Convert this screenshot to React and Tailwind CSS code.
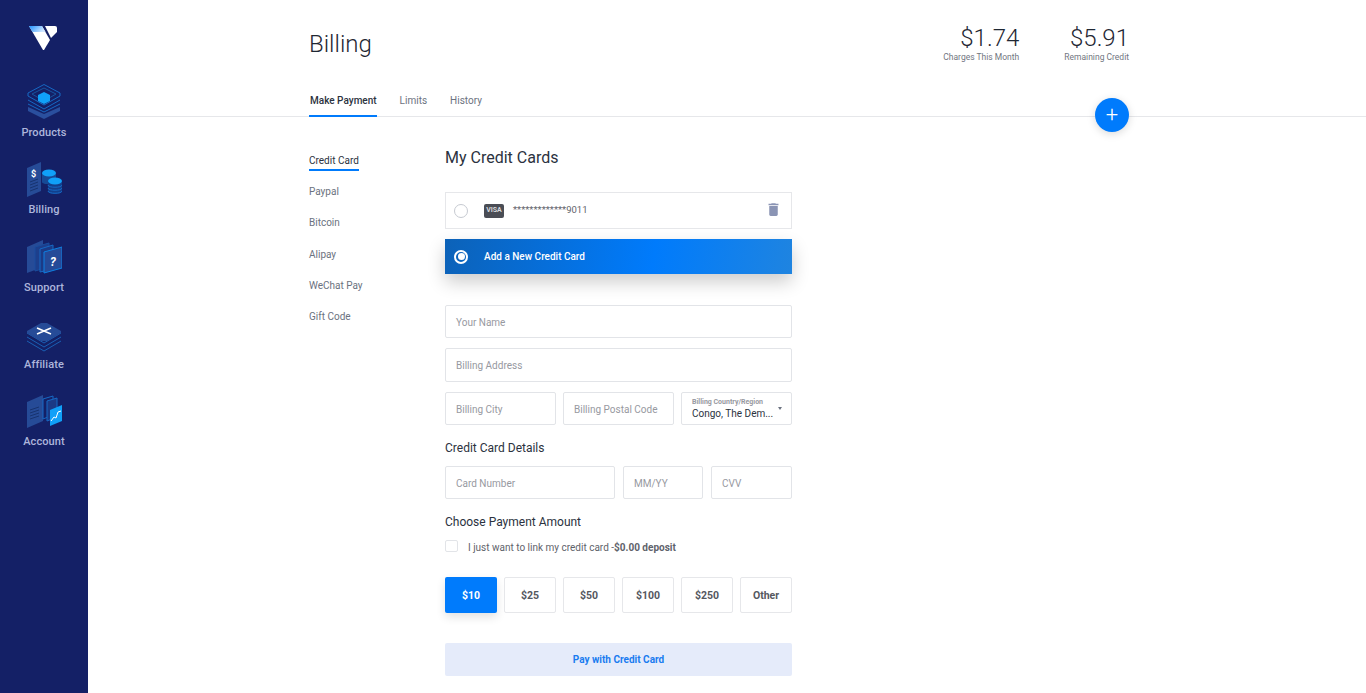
import React from 'react';

const Logo = () => (
    <svg width="28" height="26" viewBox="0 0 28 26" className="-ml-[2px] block">
        <defs>
            <linearGradient id="logoTop" x1="0" y1="0" x2="1" y2="0.4">
                <stop offset="0" stopColor="#1e90ff" />
                <stop offset="1" stopColor="#cfe6ff" />
            </linearGradient>
        </defs>
        <path d="M0 1H13L21 15L15 25H14Z" fill="#fff" />
        <path d="M0 1H13L16.500 7H3.500Z" fill="url(#logoTop)" />
        <path d="M16 1H26Q28 1 28 3V7L22 13Z" fill="#fff" />
    </svg>
);

const ProductsIcon = () => (
    <svg width="36" height="36" viewBox="0 0 36 36">
        <path d="M2 23L18 30L34 23V27L18 35L2 27Z" fill="#2a4f9e" />
        <path d="M2 16L18 25L34 16M2 20L18 28L34 20" fill="none" stroke="#1668c4" strokeWidth="1" />
        <path d="M2 9L18 .5L34 9V12L18 21L2 12Z" fill="none" stroke="#1668c4" strokeWidth="1" />
        <path d="M6 10L18 4L30 10L18 17Z" fill="none" stroke="#17549f" strokeWidth="1" />
        <path d="M18 8L24 11V17L18 20L12 17V11Z" fill="#10a0f8" />
    </svg>
);

const BillingIcon = () => (
    <svg width="36" height="36" viewBox="0 0 36 36">
        <path d="M1 7L15 1V30L1 36Z" fill="#264b97" />
        <text x="5" y="16" fill="#fff" fontSize="9" fontWeight="700" fontFamily="Roboto, sans-serif">$</text>
        <path d="M4 21L12 18M4 24L12 21M4 27L12 24M4 30L12 27" stroke="#17336f" strokeWidth="1" />
        <path d="M16 12V21C16 24 30 24 30 21V12" fill="#164a96" />
        <ellipse cx="23" cy="12" rx="7" ry="3.500" fill="#10a0f8" />
        <path d="M22 20V30C22 34 36 34 36 30V20" fill="#123f8c" />
        <path d="M22 24C22 27 36 27 36 24M22 27C22 30 36 30 36 27M22 30C22 33 36 33 36 30" fill="none" stroke="#1668c4" strokeWidth="1" />
        <ellipse cx="29" cy="20" rx="7" ry="3.500" fill="#10a0f8" />
    </svg>
);

const SupportIcon = () => (
    <svg width="36" height="36" viewBox="0 0 36 36">
        <path d="M1 8L17 1V28L1 34Z" fill="#264b97" />
        <path d="M9 8L23 4V28L9 32Z" fill="#1d3f8c" stroke="#1a4d9e" strokeWidth="1" />
        <path d="M14 10L27 6V30L14 33Z" fill="#1b3a86" stroke="#1668c4" strokeWidth="1" />
        <path d="M18 13L36 8V29L18 34Z" fill="#254a98" stroke="#0f7fe0" strokeWidth="1" />
        <text x="24" y="27" fill="#fff" fontSize="12" fontWeight="700" fontStyle="italic" fontFamily="Roboto, sans-serif">?</text>
    </svg>
);

const AffiliateIcon = () => (
    <svg width="36" height="30" viewBox="0 0 36 30">
        <path d="M1 15L18 25L35 15M1 19L18 29L35 19M1 11L18 21L35 11" fill="none" stroke="#1a5fb4" strokeWidth="1" />
        <path d="M1 9L15 1H21L35 9V11L21 19H15L1 11Z" fill="#264b97" />
        <path d="M11 6L25 12M25 6L11 12" fill="none" stroke="#fff" strokeWidth="1.500" />
    </svg>
);

const AccountIcon = () => (
    <svg width="36" height="36" viewBox="0 0 36 36">
        <path d="M1 9L17 2V28L1 35Z" fill="#264b97" />
        <path d="M4 17L13 14M4 20L13 17M4 23L13 20M4 26L13 23" stroke="#17336f" strokeWidth="1" />
        <path d="M17 6L27 3V22L17 26Z" fill="none" stroke="#1668c4" strokeWidth="1" />
        <path d="M21 8L31 5V24L21 28Z" fill="#1b3a86" stroke="#1668c4" strokeWidth="1" />
        <path d="M24 17L36 12V28L24 33Z" fill="#10a0f8" />
        <path d="M25 28L28 24L30 25L32 19L35 18" fill="none" stroke="#fff" strokeWidth="1" />
    </svg>
);

const navItems = [
    { label: 'Products', icon: <ProductsIcon />, className: 'mt-[33px]' },
    { label: 'Billing', icon: <BillingIcon />, className: 'mt-[21px]' },
    { label: 'Support', icon: <SupportIcon />, className: 'mt-[22px]' },
    { label: 'Affiliate', icon: <AffiliateIcon />, className: 'mt-[27px]' },
    { label: 'Account', icon: <AccountIcon />, className: 'mt-[21px]' },
];

const subNav = ['Paypal', 'Bitcoin', 'Alipay', 'WeChat Pay', 'Gift Code'];
const amounts = ['$25', '$50', '$100', '$250', 'Other'];

const Field = ({ text, className = '' }) => (
    <div className={`flex items-center rounded-[2px] border border-[#e2e4e8] pt-px pl-[10px] text-[10px] text-[#97999f] ${className}`}>
        {text}
    </div>
);

export default function App() {
    return (
        <div className="flex h-[693px] overflow-hidden bg-white font-['Roboto',sans-serif]">
            <aside className="flex w-[88px] shrink-0 flex-col items-center bg-[#142066]">
                <div className="mt-[25px]"><Logo /></div>
                {navItems.map((item) => (
                    <div key={item.label} className={`flex flex-col items-center ${item.className}`}>
                        {item.icon}
                        <span className="mt-[6px] text-[11px] leading-[14px] font-medium tracking-[0.1px] text-[#aeb6dc]">{item.label}</span>
                    </div>
                ))}
            </aside>

            <main className="relative min-w-0 flex-1">
                <header className="h-[117px] border-b border-[#e6e7ea] pl-[221px]">
                    <div className="flex h-[62px] w-[820px] items-start justify-between">
                        <h1 className="mt-[28px] text-[24px] leading-[32px] font-light text-[#1f2733]">Billing</h1>
                        <div className="mt-[24px] flex gap-[45px]">
                            <div className="text-right">
                                <div className="text-[24px] leading-[28px] font-light text-[#1f2733]">$1.74</div>
                                <div className="text-[8.500px] leading-[10px] text-[#72767f]">Charges This Month</div>
                            </div>
                            <div className="text-right">
                                <div className="text-[24px] leading-[28px] font-light text-[#1f2733]">$5.91</div>
                                <div className="text-[8.500px] leading-[10px] text-[#72767f]">Remaining Credit</div>
                            </div>
                        </div>
                    </div>
                    <nav className="mt-[32px] flex text-[10px]">
                        <span className="border-b-2 border-[#007bfc] pb-[7px] pl-px leading-[14px] font-medium text-[#2b3240]">Make Payment</span>
                        <span className="ml-[23px] leading-[14px] text-[#6b7280]">Limits</span>
                        <span className="ml-[23px] leading-[14px] text-[#6b7280]">History</span>
                    </nav>
                </header>

                <button className="absolute top-[98px] left-[1007px] flex h-[34px] w-[34px] items-center justify-center rounded-full bg-[#007bfc] text-[22px] leading-none font-light text-white shadow-[0_2px_8px_rgba(0,0,0,0.15)]">+</button>

                <div className="flex pl-[221px]">
                    <div className="w-[136px] shrink-0 pt-[36px] text-[10px] text-[#6b7280]">
                        <div className="inline-block border-b-2 border-[#007bfc] pb-px leading-[14px] text-[#2b3240]">Credit Card</div>
                        {subNav.map((label) => (
                            <div key={label} className="mt-[14.200px] h-[17px] leading-[14px]">{label}</div>
                        ))}
                    </div>

                    <div className="w-[347px] shrink-0">
                        <h2 className="mt-[31px] text-[16px] leading-[20px] text-[#2b3240]">My Credit Cards</h2>

                        <div className="mt-[24px] flex h-[37px] items-center border border-[#e6e7ea] pr-[9px] pl-[8px]">
                            <span className="h-[14px] w-[14px] rounded-full border border-[#c6cad1]"></span>
                            <span className="ml-[16px] flex h-[14px] w-[20px] items-center justify-center rounded-[2px] bg-[#4a4d55] text-[7px] font-bold text-[#d8dade]">VISA</span>
                            <span className="ml-[9px] text-[9.500px] text-[#5f636b]">*************9011</span>
                            <svg viewBox="0 0 24 24" className="ml-auto -mt-[2px] h-[17px] w-[17px] fill-[#8a94b4]">
                                <path d="M6 19c0 1.100.9 2 2 2h8c1.100 0 2-.9 2-2V7H6v12zM19 4h-3.500l-1-1h-5l-1 1H5v2h14V4z" />
                            </svg>
                        </div>

                        <div className="mt-[10px] flex h-[35px] items-center bg-[linear-gradient(100deg,#0c62b8,#007bfc_60%,#1f84e0)] pl-[9px] shadow-[0_8px_18px_rgba(0,0,0,0.2)]">
                            <span className="flex h-[14px] w-[14px] items-center justify-center rounded-full border-2 border-white">
                                <span className="h-[7px] w-[7px] rounded-full bg-white"></span>
                            </span>
                            <span className="ml-[16px] text-[10px] font-medium text-white">Add a New Credit Card</span>
                        </div>

                        <Field text="Your Name" className="mt-[31px] h-[33px]" />
                        <Field text="Billing Address" className="mt-[10px] h-[34px]" />

                        <div className="mt-[10px] flex gap-[7px]">
                            <Field text="Billing City" className="h-[33px] w-[111px]" />
                            <Field text="Billing Postal Code" className="h-[33px] w-[111px]" />
                            <div className="relative flex h-[33px] w-[111px] flex-col justify-center rounded-[2px] border border-[#e2e4e8] pt-px pl-[10px]">
                                <span className="text-[7px] leading-[9px] font-bold text-[#97999f]">Billing Country/Region</span>
                                <span className="text-[10px] leading-[13px] text-[#2b3240]">Congo, The Dem...</span>
                                <span className="absolute top-[14px] right-[9px] h-0 w-0 border-x-[2px] border-t-[3px] border-x-transparent border-t-[#6b7280]"></span>
                            </div>
                        </div>

                        <h3 className="mt-[15px] text-[12px] leading-[16px] text-[#2b3240]">Credit Card Details</h3>

                        <div className="mt-[10px] flex">
                            <Field text="Card Number" className="h-[33px] w-[170px]" />
                            <Field text="MM/YY" className="ml-[8px] h-[33px] w-[80px]" />
                            <Field text="CVV" className="ml-[8px] h-[33px] w-[81px]" />
                        </div>

                        <h3 className="mt-[15px] text-[12px] leading-[16px] text-[#2b3240]">Choose Payment Amount</h3>

                        <div className="mt-[10px] flex h-[15px] items-start">
                            <span className="h-[12px] w-[13px] rounded-[2px] border border-[#e2e4e8]"></span>
                            <span className="ml-[10px] text-[10px] leading-[15px] text-[#5f636b]">
                                I just want to link my credit card -<b className="font-bold">$0.00 deposit</b>
                            </span>
                        </div>

                        <div className="mt-[22px] flex gap-[7px]">
                            <div className="flex h-[36px] w-[52px] items-center justify-center rounded-[2px] bg-[#007bfc] pt-px text-[10.500px] font-bold text-white shadow-[0_4px_10px_rgba(0,0,0,0.12)]">$10</div>
                            {amounts.map((amount) => (
                                <div key={amount} className="flex h-[36px] w-[52px] items-center justify-center rounded-[2px] border border-[#e6e7ea] pt-px text-[10.500px] font-bold text-[#55585f]">{amount}</div>
                            ))}
                        </div>

                        <div className="mt-[30px] flex h-[33px] items-center justify-center rounded-[2px] bg-[#e5ebfa] text-[10px] font-bold text-[#1a7cf0]">Pay with Credit Card</div>
                    </div>
                </div>
            </main>
        </div>
    );
}
